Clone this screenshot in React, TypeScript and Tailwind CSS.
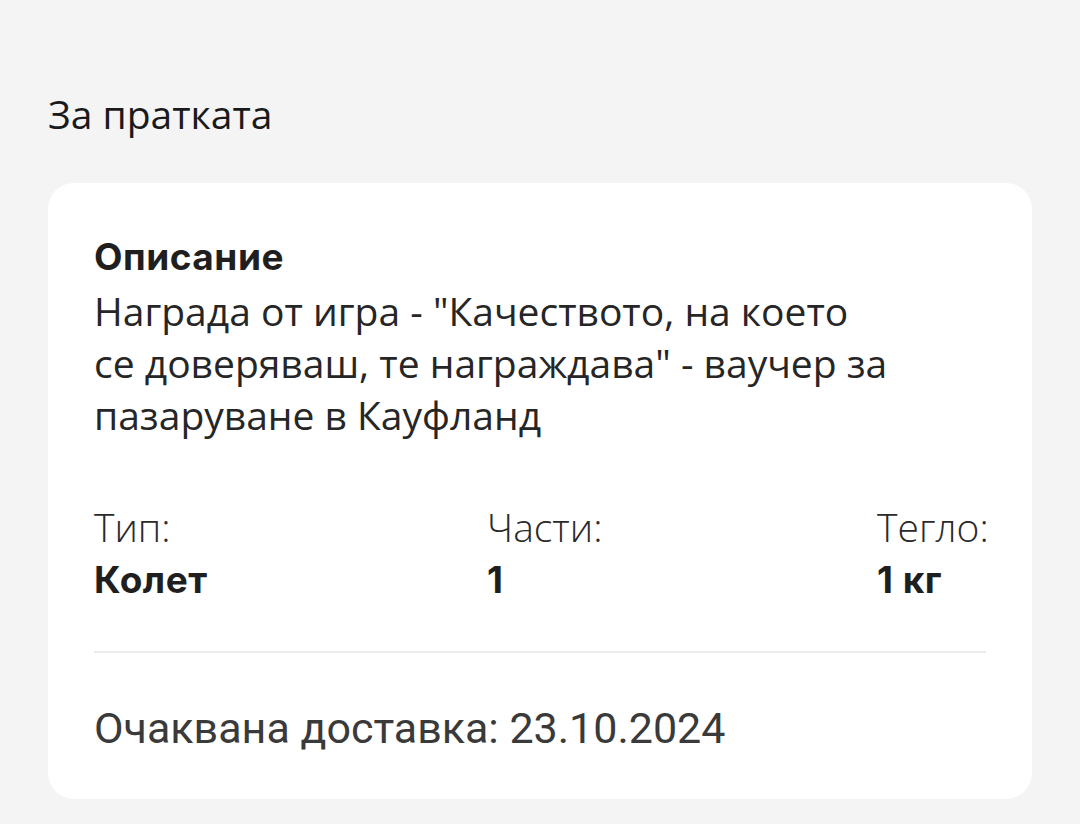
const InfoColumn = ({ label, value }: { label: string; value: string }) => (
  <div className="flex flex-col">
    <span className="text-[39px] leading-[50px] font-light text-[#2a2a2a] [font-family:'Open_Sans',sans-serif]">
      {label}
    </span>
    <span className="text-[37px] leading-[56px] font-bold tracking-[0.5px] text-[#1f1f1f] [font-family:Inter,sans-serif]">
      {value}
    </span>
  </div>
);

const App = () => {
  return (
    <div className="min-h-[824px] w-full bg-[#f4f4f4] px-12 pt-[88px] pb-6">
      <h2 className="text-[39px] leading-[52px] text-[#1a1a1a] [font-family:'Open_Sans',sans-serif]">
        За пратката
      </h2>
      <div className="mt-[43px] rounded-[26px] bg-white px-[46px] pt-[52px] pb-[45px]">
        <h3 className="text-[37px] leading-[44px] font-bold tracking-[0.5px] text-[#1f1f1f] [font-family:Inter,sans-serif]">
          Описание
        </h3>
        <p className="mt-[6px] text-[39px] leading-[52px] text-[#262626] [font-family:'Open_Sans',sans-serif]">
          Награда от игра - "Качеството, на което
          <br />
          се доверяваш, те награждава" - ваучер за
          <br />
          пазаруване в Кауфланд
        </p>
        <div className="mt-[61px] grid grid-cols-[393px_390px_auto]">
          <InfoColumn label="Тип:" value="Колет" />
          <InfoColumn label="Части:" value="1" />
          <InfoColumn label="Тегло:" value="1 кг" />
        </div>
        <div className="mt-[43px] h-[2px] bg-[#ebebeb]" />
        <p className="mt-[49px] text-[43px] leading-[52px] text-[#3a3a3a] [font-family:Roboto,sans-serif]">
          Очаквана доставка: 23.10.2024
        </p>
      </div>
    </div>
  );
};

export default App;
